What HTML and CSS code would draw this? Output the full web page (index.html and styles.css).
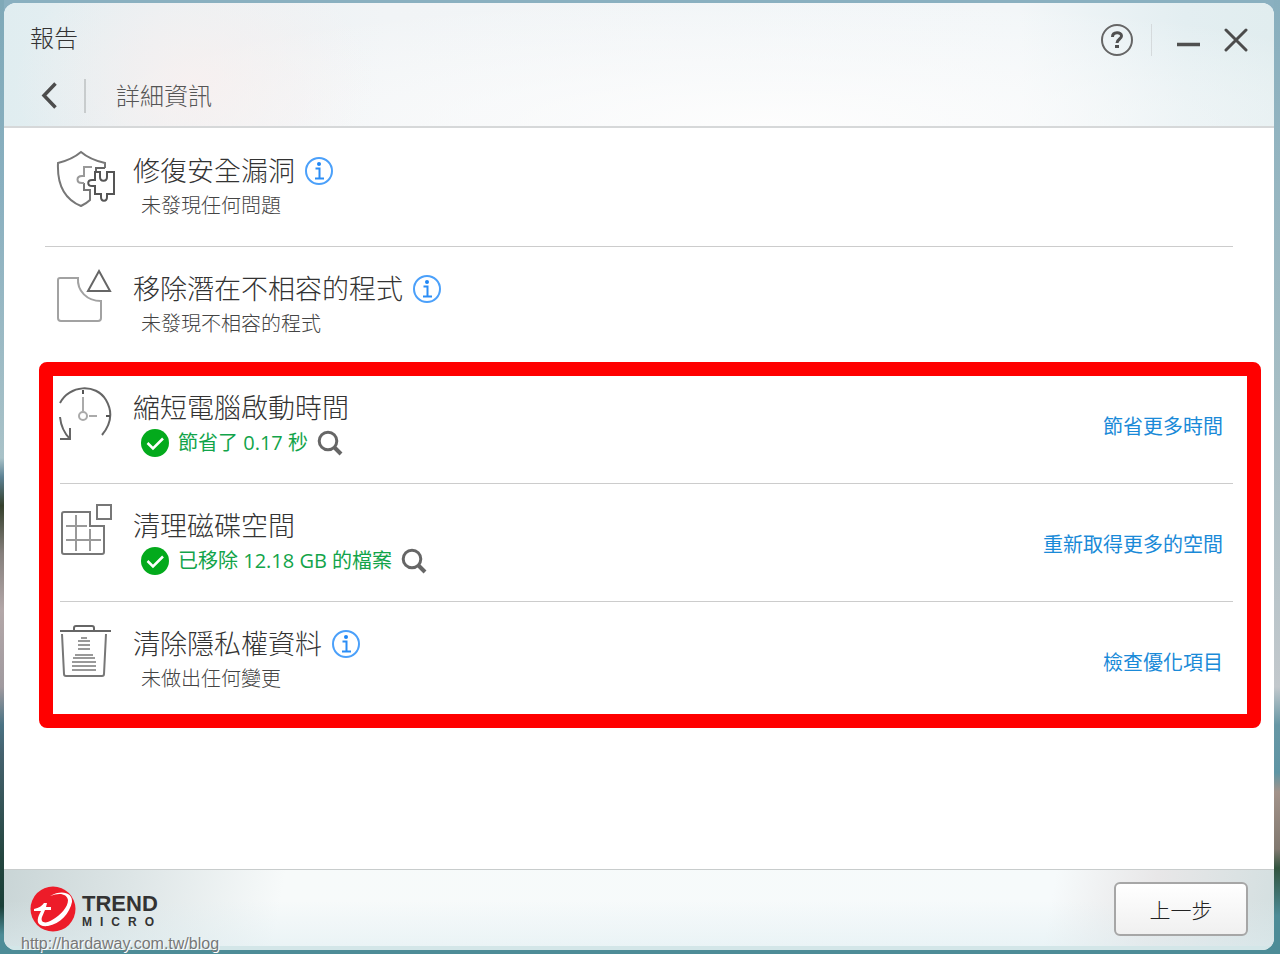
FILE: index.html
```html
<!DOCTYPE html>
<html lang="zh-Hant">
<head>
    <meta charset="UTF-8">
    <meta name="viewport" content="width=device-width, initial-scale=1.0">
    <title>報告 - 詳細資訊</title>
    <link rel="stylesheet" href="styles.css">
</head>
<body>
    <svg class="defs" width="0" height="0" aria-hidden="true">
        <symbol id="icon-info" viewBox="0 0 28 28">
            <circle cx="14" cy="14" r="13" fill="none" stroke="#4ba0fa" stroke-width="2"/>
            <circle cx="14" cy="7" r="2" fill="#1e86f5"/>
            <path d="M10.500 11.500H14.500V21M10 21.500H19" fill="none" stroke="#2b8df6" stroke-width="2"/>
        </symbol>
        <symbol id="icon-check" viewBox="0 0 28 28">
            <circle cx="14" cy="14" r="14" fill="#03aa1c"/>
            <path d="M6.500 14L12 19.500L22 9.500" fill="none" stroke="#fff" stroke-width="2.500"/>
        </symbol>
        <symbol id="icon-search" viewBox="0 0 26 26">
            <circle cx="11" cy="11" r="8.800" fill="none" stroke="#666" stroke-width="3"/>
            <path d="M17 17L24 24" fill="none" stroke="#666" stroke-width="4"/>
        </symbol>
    </svg>

    <div class="window">
        <header class="header">
            <div class="title-bar">
                <h1>報告</h1>
                <div class="window-buttons">
                    <button class="icon-button help" aria-label="說明">
                        <svg width="32" height="32" viewBox="0 0 32 32">
                            <circle cx="16" cy="16" r="15" fill="none" stroke="#666" stroke-width="2"/>
                            <path d="M11.500 13C11.500 7.500 20.500 7.500 20.500 12C20.500 15 16 15 16 19" fill="none" stroke="#505050" stroke-width="3"/>
                            <rect x="14" y="21" width="4" height="3" fill="#505050"/>
                        </svg>
                    </button>
                    <button class="icon-button minimize" aria-label="最小化">
                        <svg width="24" height="32" viewBox="0 0 24 32">
                            <path d="M1 20.500H24" stroke="#505050" stroke-width="3.500"/>
                        </svg>
                    </button>
                    <button class="icon-button close" aria-label="關閉">
                        <svg width="24" height="32" viewBox="0 0 24 32">
                            <path d="M2 6L22 26M22 6L2 26" stroke="#4c4c4c" stroke-width="3" stroke-linecap="round"/>
                        </svg>
                    </button>
                </div>
            </div>
            <div class="nav-bar">
                <button class="icon-button back" aria-label="返回">
                    <svg width="18" height="28" viewBox="0 0 18 28">
                        <path d="M16.500 1.500L5 13.500L16.500 25.500" fill="none" stroke="#4c4c4c" stroke-width="3.500"/>
                    </svg>
                </button>
                <h2>詳細資訊</h2>
            </div>
        </header>

        <main class="content">
            <section class="row">
                <svg class="row-icon" viewBox="0 0 60 60" fill="none">
                    <path d="M49 19V14C40 12 32 9 25 3C18 9 10 12 2 14C1 36 8 50 25 57C29 55 32 53 34 51V41H28V34" stroke="#777" stroke-width="2"/>
                    <path d="M28 34H26C20 34 20 27 26 27H28V18H36" stroke="#999" stroke-width="2"/>
                    <path d="M49 19H40V23" stroke="#666" stroke-width="2"/>
                    <path d="M39 23H44V28C44 33 51 33 51 28V23H58V45H51V48C51 53 45 53 45 48V45H39V37H36C31 37 31 31 36 31H39Z" stroke="#555" stroke-width="2"/>
                </svg>
                <div class="row-text">
                    <h3>修復安全漏洞
                        <button class="icon-button" aria-label="修復安全漏洞說明"><svg width="28" height="28"><use href="#icon-info"/></svg></button>
                    </h3>
                    <p>未發現任何問題</p>
                </div>
            </section>
            <section class="row divider">
                <svg class="row-icon" viewBox="0 0 60 60" fill="none">
                    <path d="M4 11H22C21 24 31 34 45 34V51Q45 54 42 54H5Q2 54 2 51V13Q2 11 4 11Z" stroke="#a2a2a2" stroke-width="2"/>
                    <path d="M43 4L54 24H32Z" stroke="#666" stroke-width="2"/>
                </svg>
                <div class="row-text">
                    <h3>移除潛在不相容的程式
                        <button class="icon-button" aria-label="移除潛在不相容的程式說明"><svg width="28" height="28"><use href="#icon-info"/></svg></button>
                    </h3>
                    <p>未發現不相容的程式</p>
                </div>
            </section>

            <div class="highlight">
                <section class="row">
                    <svg class="row-icon" viewBox="0 0 60 60" fill="none">
                        <path d="M4 17C13 -1 40 -3 50 14C57 26 55 38 46 49M4 31C5 41 9 48 14 53" stroke="#666" stroke-width="2"/>
                        <path d="M4 53H14V42" stroke="#666" stroke-width="2"/>
                        <circle cx="27" cy="30" r="4" stroke="#aaa" stroke-width="2"/>
                        <path d="M27 11V25M33 30H41" stroke="#aaa" stroke-width="2"/>
                        <path d="M27 4V8M50 30H54" stroke="#555" stroke-width="2"/>
                    </svg>
                    <div class="row-text">
                        <h3>縮短電腦啟動時間</h3>
                        <p class="done">
                            <svg width="28" height="28" aria-hidden="true"><use href="#icon-check"/></svg>
                            <span>節省了 0.17 秒</span>
                            <button class="icon-button" aria-label="檢視啟動時間"><svg width="26" height="26"><use href="#icon-search"/></svg></button>
                        </p>
                    </div>
                    <a class="row-link" href="#">節省更多時間</a>
                </section>
                <section class="row divider">
                    <svg class="row-icon" viewBox="0 0 60 60" fill="none">
                        <path d="M8 8H34V22H48V48Q48 50 46 50H8Q6 50 6 48V10Q6 8 8 8Z" stroke="#777" stroke-width="2"/>
                        <path d="M20 11V47M34 25V47M10 22H31M10 36H45" stroke="#999" stroke-width="2"/>
                        <rect x="41" y="1" width="14" height="14" stroke="#777" stroke-width="2"/>
                    </svg>
                    <div class="row-text">
                        <h3>清理磁碟空間</h3>
                        <p class="done">
                            <svg width="28" height="28" aria-hidden="true"><use href="#icon-check"/></svg>
                            <span>已移除 12.18 GB 的檔案</span>
                            <button class="icon-button" aria-label="檢視已移除的檔案"><svg width="26" height="26"><use href="#icon-search"/></svg></button>
                        </p>
                    </div>
                    <a class="row-link" href="#">重新取得更多的空間</a>
                </section>
                <section class="row divider">
                    <svg class="row-icon" viewBox="0 0 60 60" fill="none">
                        <path d="M4 9H55M18 9V6Q18 4 20 4H36Q38 4 38 6V9" stroke="#666" stroke-width="2"/>
                        <path d="M6 12L8 52Q8 54 10 54H46Q48 54 48 52L50 12" stroke="#777" stroke-width="2"/>
                        <path d="M25 16H31M22 19H34M22 23H34M22 27H34M19 33H37M17 36H39M16 40H40M16 44H40M16 48H40" stroke="#999" stroke-width="2"/>
                    </svg>
                    <div class="row-text">
                        <h3>清除隱私權資料
                            <button class="icon-button" aria-label="清除隱私權資料說明"><svg width="28" height="28"><use href="#icon-info"/></svg></button>
                        </h3>
                        <p>未做出任何變更</p>
                    </div>
                    <a class="row-link" href="#">檢查優化項目</a>
                </section>
            </div>
        </main>

        <footer class="footer">
            <div class="logo">
                <svg width="46" height="46" viewBox="0 0 46 46" aria-hidden="true">
                    <circle cx="23" cy="23" r="22.500" fill="#ed1c29"/>
                    <path d="M20 10C32 3 43 7 42 16C40 27 30 38 18 40C8 41 6 36 9 29L11 25H4V23C9 22 12 20 14 17H17L16 21H21V24H15L12 31C10 37 16 38 22 34C31 29 38 21 38 14C37 8 30 6 20 10Z" fill="#fff"/>
                </svg>
                <div class="logo-text">
                    <strong>TREND</strong>
                    <span>MICRO</span>
                </div>
            </div>
            <button class="prev-button">上一步</button>
        </footer>
    </div>

    <div class="watermark">http://hardaway.com.tw/blog</div>
</body>
</html>
```

FILE: styles.css
```css
* {
    box-sizing: border-box;
}

body {
    margin: 0;
    padding: 3px 6px 4px 4px;
    min-height: 100vh;
    display: flex;
    position: relative;
    font-family: "Open Sans", "Noto Sans CJK TC", sans-serif;
    color: #333;
    background:
        linear-gradient(#7fa9b8 0%, #8ab0c0 20%, #a9c2c8 48%, #5d8294 50%, #35402c 53%, #857f7c 58%, #b3a7a8 64%, #a09a9f 72%, #4a7283 76%, #45626e 79%, #24463f 90%, #1a3f38 95%, #4d8c97 98%) left / 4px 100% no-repeat,
        linear-gradient(#88afbe 0%, #a5bdc4 40%, #c2c8cc 72%, #6797a5 76%, #5f95a4 81%, #a3938a 83%, #817970 89%, #31543f 91%, #4d8c97 96%) right / 6px 100% no-repeat,
        linear-gradient(#8ab0c0 50%, #4d8c97 50%);
}

h1, h2, h3, p {
    margin: 0;
    font-weight: 300;
}

.defs {
    position: absolute;
}

svg {
    display: block;
    flex: none;
}

.icon-button {
    padding: 0;
    border: none;
    background: none;
    cursor: pointer;
}

.window {
    flex: 1;
    display: flex;
    flex-direction: column;
    background: #fff;
    border-radius: 12px;
    overflow: hidden;
}

/* Header */
.header {
    height: 125px;
    border-bottom: 2px solid #d6d8d9;
    background:
        radial-gradient(ellipse 180px 130px at 190px 80px, rgba(249, 240, 239, 0.8), transparent),
        radial-gradient(ellipse 700px 130px at 60% 100%, #fdfdfd, transparent),
        linear-gradient(90deg, #e0edf0 0%, #e9f0f3 12%, #f1f4f6 30%, #f2f6f8 80%, #e3eef1 93%, #e1edef 100%);
}

.title-bar {
    height: 70px;
    padding: 0 26px;
    display: flex;
    justify-content: space-between;
    align-items: center;
}

.header h1,
.header h2 {
    font-size: 24px;
    line-height: 36px;
}

.header h2 {
    color: #555;
}

.window-buttons {
    display: flex;
    align-items: center;
    padding-top: 4px;
}

.help {
    padding-right: 18px;
    border-right: 1px solid #d5dadc;
}

.minimize {
    margin: 0 24px;
}

.nav-bar {
    display: flex;
    align-items: center;
    padding-left: 35px;
    height: 46px;
}

.back {
    padding: 3px 27px 3px 0;
    border-right: 2px solid #c8cccd;
}

.nav-bar h2 {
    margin-left: 30px;
}

/* Report rows */
.content {
    flex: 1;
    padding: 0 41px;
}

.row {
    display: flex;
    height: 118px;
    padding: 24px 10px 0 11px;
    border-top: 1px solid transparent;
}

.row.divider {
    border-top-color: #ccc;
}

.row-icon {
    width: 60px;
    height: 60px;
    margin-top: -4px;
    margin-right: 17px;
}

.row-text {
    flex: 1;
}

.row h3 {
    display: flex;
    align-items: center;
    gap: 10px;
    font-size: 27px;
    line-height: 36px;
}

.row p {
    padding-left: 8px;
    font-size: 20px;
    line-height: 34px;
    color: #444;
}

.row .done {
    display: flex;
    align-items: center;
    gap: 9px;
    font-weight: 400;
    color: #12a44a;
}

.row-link {
    margin-top: 20px;
    font-size: 20px;
    line-height: 34px;
    color: #1a8ad8;
    text-decoration: none;
}

.row-link:hover {
    text-decoration: underline;
}

/* Red frame drawn over the group */
.highlight {
    position: relative;
    margin-top: 1px;
    padding-left: 15px;
}

.highlight .row {
    padding-left: 0;
}

.highlight .row-icon {
    margin-left: -4px;
}

.highlight::after {
    content: "";
    position: absolute;
    inset: -3px -28px -9px -6px;
    border: 14px solid #f00;
    border-radius: 8px;
    pointer-events: none;
}

/* Footer */
.footer {
    height: 81px;
    padding: 2px 26px 0;
    display: flex;
    justify-content: space-between;
    align-items: center;
    border-top: 1px solid #c8cccc;
    border-bottom: 4px solid #d3e6e8;
    background:
        linear-gradient(180deg, transparent 40%, rgba(222, 237, 241, 0.5)),
        linear-gradient(100deg, #c9d5d6 0%, #dde5e6 10%, #f7fafa 22%, #f6fafb 82%, #e8e7e8 90%, #d3dfe0 100%);
}

.logo {
    display: flex;
    align-items: center;
    gap: 6px;
}

.logo-text {
    padding-top: 2px;
    font-family: "Liberation Sans", sans-serif;
    font-weight: bold;
    color: #333;
}

.logo-text strong,
.logo-text span {
    display: block;
}

.logo-text strong {
    font-size: 22px;
    line-height: 24px;
}

.logo-text span {
    font-size: 12px;
    line-height: 12px;
    letter-spacing: 8px;
}

.prev-button {
    width: 134px;
    height: 54px;
    border: 2px solid #a6a6a6;
    border-radius: 6px;
    background: linear-gradient(#fff, #f0f0f0);
    font-family: inherit;
    font-size: 21px;
    font-weight: 300;
    color: #222;
    cursor: pointer;
}

.watermark {
    position: absolute;
    left: 21px;
    bottom: 1px;
    font-family: "Liberation Sans", sans-serif;
    font-size: 16px;
    line-height: 18px;
    color: #777;
    text-shadow: 1px 1px 0 #fff;
}
```
